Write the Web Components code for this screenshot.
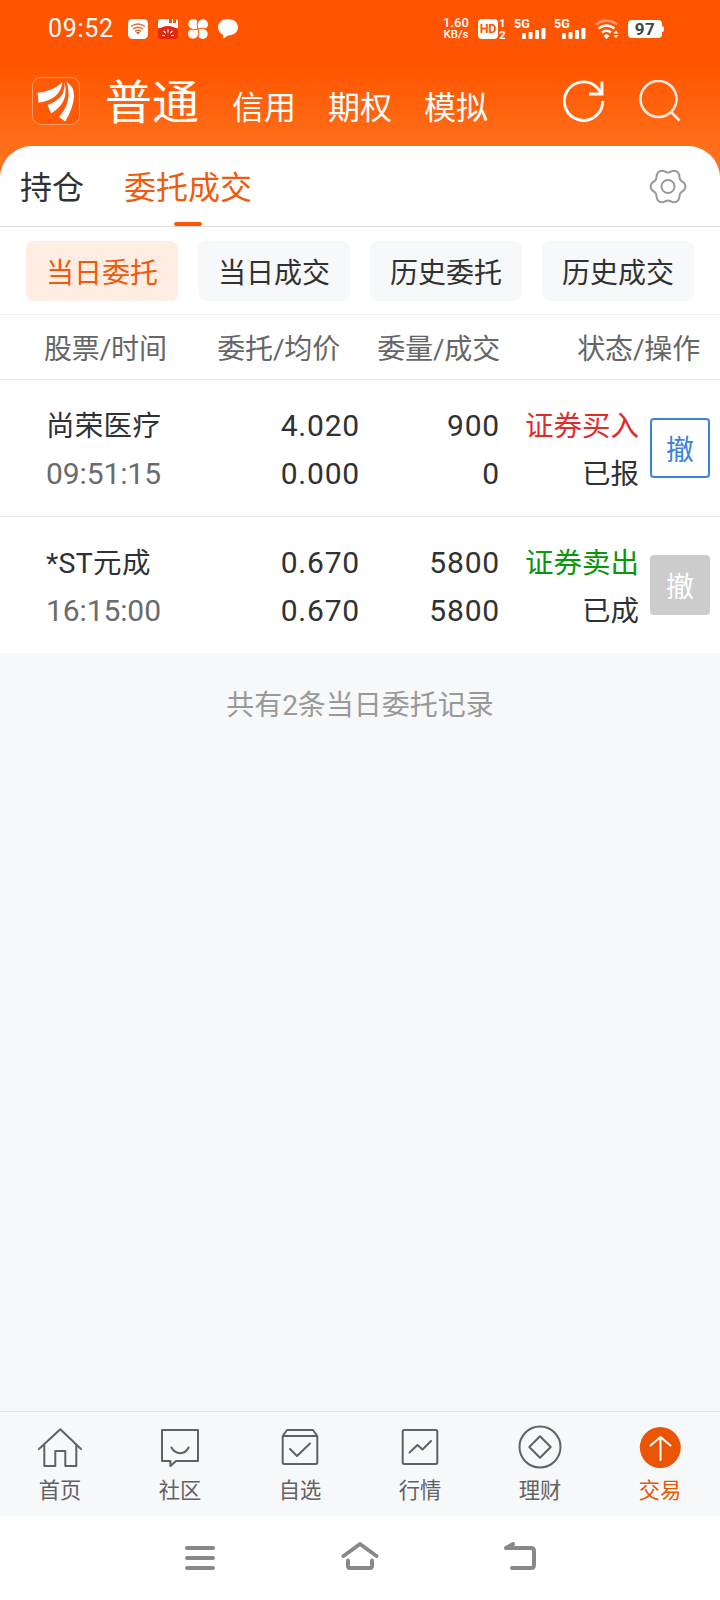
<!DOCTYPE html>
<html lang="zh-CN">
<head>
<meta charset="utf-8">
<title>委托成交</title>
<style>
  html, body { margin: 0; height: 100%; }
  body { font-family: Roboto, "Noto Sans CJK SC", sans-serif; color: #303133; background: #fff; }
</style>
</head>
<body>
<trade-app></trade-app>
<script>
(function () {
  // register an element whose shadow markup comes from render(host)
  function define(name, render) {
    customElements.define(name, class extends HTMLElement {
      connectedCallback() {
        if (this.shadowRoot) return;
        const tpl = document.createElement('template');
        tpl.innerHTML = render(this);
        this.attachShadow({ mode: 'open' }).appendChild(tpl.content.cloneNode(true));
      }
    });
  }

  // six soft lobes around the centre, drawn in polar coordinates
  function gearPath(cx, cy) {
    const pts = [];
    for (let a = 0; a < 360; a += 5) {
      const t = a * Math.PI / 180, r = 15.8 + 1.7 * Math.cos(6 * t) - 0.1 * Math.cos(12 * t);
      pts.push((cx + r * Math.cos(t)).toFixed(2) + ' ' + (cy + r * Math.sin(t)).toFixed(2));
    }
    return 'M' + pts.join('L') + 'Z';
  }

  const TAB_ICONS = {
    home: '<path d="M5 27 26.300 7.200 47 27M10.300 23v21h11V29h10v15h11V23"/>',
    chat: '<path d="M8 8h36v31H22l-5.600 5V39H8zM17.500 25.500c4 7.500 13.500 7.500 17 0"/>',
    pick: '<path d="M8.700 14 13 8h26l4.300 6v26.500q0 1.500-1.500 1.500H10.200q-1.500 0-1.500-1.500zM8.700 14h34.600M16 27l7 7 13-12.500"/>',
    chart: '<rect x="8.700" y="8" width="34.600" height="34" rx="1.500"/><path d="M15.500 30.500 23.500 23l5 4.500L37 19"/>',
    money: '<circle cx="26" cy="25" r="20.500"/><path d="M26 14.300 36.700 25 26 35.700 15.300 25z"/>',
    trade: '<circle cx="26.300" cy="25.500" r="20.500" fill="#ea5504" stroke="none"/><path d="M26.500 38V15M16.500 23.500l10-8.500 10 8.500" stroke="#fff"/>'
  };

  define('status-bar', () => `
    <style>
      :host { display: flex; align-items: center; height: 57px; box-sizing: border-box; padding: 0 56px 0 48px; color: #fff; }
      time { width: 80px; font-size: 25px; letter-spacing: .7px; line-height: 30px; }
      .apps { display: flex; gap: 10px; flex: 1; }
      svg { display: block; }
      .net { width: 30px; margin-right: 7px; text-align: center; font-size: 13px; line-height: 12px; font-weight: 500; }
      .net div + div { font-size: 11.500px; line-height: 11px; }
      .hd { display: flex; align-items: center; gap: 1px; width: 36px; }
      .hd b { width: 20px; height: 20px; border-radius: 4px; background: #fff; color: #ff5500; font-size: 12.500px; line-height: 20px; text-align: center; letter-spacing: -.3px; }
      .hd > span { font-size: 11.500px; line-height: 12px; font-weight: 700; display: grid; justify-items: center; }
      .sim { width: 40px; height: 20px; display: grid; grid-template-rows: 9px 11px; }
      .sim i { font: 700 12.500px/10px Roboto, sans-serif; }
      .sim svg { margin-left: 8px; }
      .wifi { margin-right: 8px; }
      .bat { display: flex; align-items: center; }
      .bat b { width: 34px; height: 18px; border-radius: 4px; background: #fff; color: #444; font-size: 17px; line-height: 19px; text-align: center; letter-spacing: .5px; }
      .bat i { width: 2px; height: 6px; background: #fff; border-radius: 0 2px 2px 0; }
    </style>
    <time>09:52</time>
    <div class="apps">
      <svg width="20" height="20"><rect width="20" height="20" rx="4.500" fill="#fff"/>
        <g fill="none" stroke="#d9703a" stroke-width="1.500"><path d="M3 7.500q7-5 14 0M5 10q5-3.500 10 0M7 12.300q3-2 6 0"/></g><path d="M8 13.300q2-1 4 0l-2 2.200z" fill="#c85a28"/></svg>
      <svg width="20" height="20"><path d="M0 9V3q0-3 3-3h8v4h3V0h1v4h3V0q2 1 2 3v6z" fill="#fff"/>
        <path d="M0 11Q4 7 10 7t10 4v6q0 3-3 3H3q-3 0-3-3z" fill="#e02a12"/>
        <path d="M10 10.500v3M5.500 12l2 2M14.500 12l-2 2M4 16.500h3M13 16.500h3" stroke="#fff" stroke-width="1.200"/></svg>
      <svg width="20" height="20"><g fill="#fff"><circle cx="5.300" cy="5" r="5"/><circle cx="15" cy="5.300" r="5"/><circle cx="5" cy="14.700" r="5"/><circle cx="14.700" cy="15" r="5"/><path d="M5 5h10v10H5z"/></g>
        <path d="M11 0Q7.500 5 10 10q2.500 5-1 10M0 9q5 3.500 10 1t10 1" fill="none" stroke="#ff5500" stroke-width="1"/></svg>
      <svg width="20" height="20"><path d="M10 0C15.700 0 20 3.500 20 8.300S15.700 16.500 10 16.500L5.500 19.500 5 15.800C2 14.500 0 11.800 0 8.300 0 3.500 4.300 0 10 0z" fill="#fff"/></svg>
    </div>
    <div class="net"><div>1.60</div><div>KB/s</div></div>
    <div class="hd"><b>HD</b><span><span>1</span><span>2</span></span></div>
    ${['', ''].map(() => `<div class="sim"><i>5G</i><svg width="25" height="11" fill="#fff"><rect x="0" y="5" width="4" height="6" rx="1"/><rect x="6.500" y="4" width="4" height="7" rx="1"/><rect x="13" y="2" width="4" height="9" rx="1"/><rect x="19.500" y="0" width="4" height="11" rx="1"/></svg></div>`).join('')}
    <svg class="wifi" width="26" height="20" fill="none" stroke="#fff" stroke-width="2.600"><path d="M2 5.500Q12.500-2.500 23 5.500" opacity=".4"/><path d="M4.500 9.500q8-6 16 0M8 13.500q4.500-3.500 9 0"/><path d="M12.500 15l3 2-3 3-3-3z" fill="#fff" stroke="none"/><path d="M22 11.500l2.500 3h-5zM22 19l2.500-3h-5z" fill="#fff" stroke="none"/></svg>
    <div class="bat"><b>97</b><i></i></div>`);

  define('app-header', () => `
    <style>
      :host { display: flex; align-items: center; height: 88px; padding: 0 39px 0 32px; color: #fff; }
      nav { flex: 1; display: flex; align-items: baseline; gap: 32px; margin: 8px 0 0 25px; font-size: 32px; line-height: 60px; }
      nav b { font-size: 47px; font-weight: 400; margin-right: 1px; }
      svg { display: block; fill: none; stroke: #fff; }
      .icons { display: flex; gap: 34px; }
    </style>
    <svg width="48" height="48"><rect x=".5" y=".5" width="47" height="47" rx="8.500" fill="#ff5a08" stroke="#ff9b62"/>
      <g fill="#fff" stroke="none"><path d="M5.500 15.700Q21 14.500 30.500 5 28.500 22.500 6.500 25.800z"/><path d="M32.300 5Q34.500 21 15.500 28L19 36.500Q38 25 32.300 5z"/><path d="M34.500 5Q42 9 42 19 41.500 30.500 33.300 44.500L27 40Q41 24 34.500 5z"/></g></svg>
    <nav><b>普通</b><span>信用</span><span>期权</span><span>模拟</span></nav>
    <div class="icons">
      <svg width="42" height="42" stroke-width="2.900"><path d="M39.700 21A19.200 19.200 0 1 1 34 7.500l4.500 5.500"/><path d="M39 1.500v12.500H26"/></svg>
      <svg width="42" height="42" stroke-width="2.600" opacity=".86"><circle cx="19.500" cy="19" r="18"/><path d="M31.500 31.500l9 9"/></svg>
    </div>`);

  define('page-tabs', () => `
    <style>
      :host { display: flex; height: 81px; box-sizing: border-box; padding: 0 33px 0 20px; border-bottom: 1px solid #dcdcdc; font-size: 32px; line-height: 84px; }
      span { margin-right: 40px; height: 80px; }
      .on { color: #f05a0c; display: grid; grid-template-rows: 76px 4px; justify-items: center; }
      .on::after { content: ""; width: 28px; height: 4px; border-radius: 2px; background: #ff5500; }
      svg { margin: 22px 0 0 auto; fill: none; stroke: #999; stroke-width: 2; }
    </style>
    <span>持仓</span><span class="on">委托成交</span>
    <svg width="38" height="38"><path d="${gearPath(19, 18.500)}"/><circle cx="19" cy="18.500" r="6.500"/></svg>`);

  define('filter-chip', (host) => `
    <style>
      :host { display: block; height: 60px; border-radius: 8px; background: #f7f8fa; font-size: 28px; line-height: 66px; text-align: center; color: #303133; }
      :host([active]) { background: #ffede4; color: #f05a0c; }
    </style><slot></slot>`);

  define('filter-bar', () => `
    <style>
      :host { display: grid; grid-template-columns: repeat(4, 152px); gap: 20px; height: 88px; box-sizing: border-box; padding: 14px 26px 0; border-bottom: 1px solid #f3f3f4; }
    </style>
    <filter-chip active>当日委托</filter-chip><filter-chip>当日成交</filter-chip><filter-chip>历史委托</filter-chip><filter-chip>历史成交</filter-chip>`);

  define('list-head', () => `
    <style>
      :host { display: grid; grid-template-columns: 121px 175px 160px 1fr; height: 65px; box-sizing: border-box; padding: 0 20px 0 44px; border-bottom: 1px solid #e9e9ea; font-size: 28px; line-height: 69px; letter-spacing: -.15px; color: #666; white-space: nowrap; }
      span { text-align: right; }
      .first { text-align: left; }
    </style>
    <span class="first">股票/时间</span><span>委托/均价</span><span>委量/成交</span><span>状态/操作</span>`);

  define('order-row', (host) => {
    const a = (k) => host.getAttribute(k);
    return `
    <style>
      :host { display: grid; grid-template-columns: 175px 139px 140px 139px 60px; height: 137px; box-sizing: border-box; padding: 23px 10px 0 46px; border-bottom: 1px solid #e9e9ea; font-size: 28.500px; line-height: 48px; white-space: nowrap; }
      :host(:last-of-type) { border-bottom: 0; height: 136px; }
      div { text-align: right; }
      .who { text-align: left; letter-spacing: .3px; }
      .n { font-size: 30px; letter-spacing: .8px; margin-top: -1px; }
      .t { display: block; margin-top: -1px; font-size: 30px; color: #6b6b6b; letter-spacing: -.1px; }
      .side { color: #e02b2b; }
      :host([sell]) .side { color: #0a960a; }
      button { width: 60px; height: 60px; box-sizing: border-box; margin: 15px 0 0 11px; padding: 6px 0 0; border: 2px solid #3c82dc; border-radius: 4px; background: #fff; color: #3c82dc; font: inherit; font-size: 28px; line-height: 50px; }
      :host([done]) button { border-color: #ccc; background: #ccc; color: #fff; }
    </style>
    <div class="who">${a('name')}<span class="t">${a('time')}</span></div>
    <div class="n">${a('price')}<br>${a('avg')}</div>
    <div class="n">${a('qty')}<br>${a('filled')}</div>
    <div><span class="side">${a('side')}</span><br>${a('state')}</div>
    <button>撤</button>`;
  });

  define('tab-item', (host) => `
    <style>
      :host { display: grid; justify-items: center; align-content: start; grid-template-rows: 50px 26px; padding-top: 10px; color: #606164; font-size: 21.300px; line-height: 38px; }
      :host([active]) { color: #ea5504; }
      svg { display: block; fill: none; stroke: #606164; stroke-width: 2; stroke-linejoin: round; stroke-linecap: round; }
    </style>
    <svg width="52" height="50">${TAB_ICONS[host.getAttribute('icon')]}</svg><span><slot></slot></span>`);

  define('tab-bar', () => `
    <style>
      :host { display: grid; grid-template-columns: repeat(6, 1fr); height: 105px; box-sizing: border-box; border-top: 1px solid #dfe1e4; background: #f7f8fa; }
    </style>
    <tab-item icon="home">首页</tab-item><tab-item icon="chat">社区</tab-item><tab-item icon="pick">自选</tab-item>
    <tab-item icon="chart">行情</tab-item><tab-item icon="money">理财</tab-item><tab-item icon="trade" active>交易</tab-item>`);

  define('system-nav', () => `
    <style>
      :host { display: flex; justify-content: center; gap: 120px; height: 84px; box-sizing: border-box; padding-top: 22px; background: #fff; }
      svg { fill: none; stroke: #888; stroke-width: 4; stroke-linecap: round; stroke-linejoin: round; }
    </style>
    <svg width="40" height="40"><path d="M7 10h26M7 20h26M7 30h26"/></svg>
    <svg width="40" height="40"><path d="M3.500 18 20 6l16.500 12M8 22.500V28q0 2 2 2h20q2 0 2-2v-5.500"/></svg>
    <svg width="40" height="40"><path d="M13 6 6 10h25q3 0 3 3v14q0 3-3 3H12"/></svg>`);

  define('trade-app', () => `
    <style>
      :host { display: flex; flex-direction: column; width: 720px; height: 1600px; overflow: hidden; background: #f7f8fa; }
      .top { height: 180px; background: linear-gradient(#ff5500 64px, #ff6f1a 146px, #ff7420); }
      .panel { margin-top: -34px; background: #fff; border-radius: 32px 32px 0 0; }
      p { flex: 1; margin: 0; padding-top: 29px; text-align: center; font-size: 28px; line-height: 48px; color: #999; }
    </style>
    <div class="top"><status-bar></status-bar><app-header></app-header></div>
    <div class="panel">
      <page-tabs></page-tabs>
      <filter-bar></filter-bar>
      <list-head></list-head>
      <order-row name="尚荣医疗" time="09:51:15" price="4.020" avg="0.000" qty="900" filled="0" side="证券买入" state="已报"></order-row>
      <order-row sell done name="*ST元成" time="16:15:00" price="0.670" avg="0.670" qty="5800" filled="5800" side="证券卖出" state="已成"></order-row>
    </div>
    <p>共有2条当日委托记录</p>
    <tab-bar></tab-bar>
    <system-nav></system-nav>`);
})();
</script>
</body>
</html>
